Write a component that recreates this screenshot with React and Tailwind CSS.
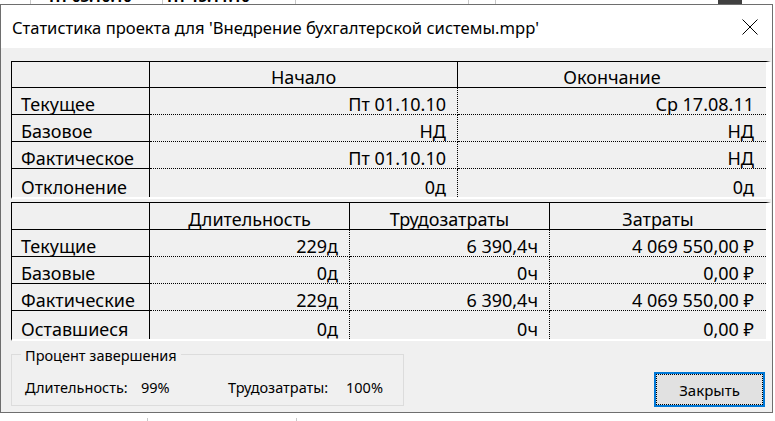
const font = "font-['Noto_Sans',sans-serif]";

const startEnd = [
  ["Текущее", "Пт 01.10.10", "Ср 17.08.11"],
  ["Базовое", "НД", "НД"],
  ["Фактическое", "Пт 01.10.10", "НД"],
  ["Отклонение", "0д", "0д"],
];

const totals = [
  ["Текущие", "229д", "6 390,4ч", "4 069 550,00 ₽"],
  ["Базовые", "0д", "0ч", "0,00 ₽"],
  ["Фактические", "229д", "6 390,4ч", "4 069 550,00 ₽"],
  ["Оставшиеся", "0д", "0ч", "0,00 ₽"],
];

function StatGrid({ headers, rows, gridClass }) {
  const lastRow = rows.length - 1;
  const lastCol = headers.length - 1;
  return (
    <div className="border-t border-l border-black border-r-[5px] border-r-white border-b-2 border-b-white w-[760px]">
      <div className={gridClass}>
        <div className="border-r border-b border-black" />
        {headers.map((h, i) => (
          <div
            key={h}
            className={
              "flex items-end justify-center border-b border-black" +
              (i < lastCol ? " border-r" : "")
            }
          >
            {h}
          </div>
        ))}
        {rows.map((row, r) => [
          <div
            key={"l" + r}
            className={
              "flex items-end pl-[9px] border-r border-black" +
              (r < lastRow ? " border-b" : "")
            }
          >
            {row[0]}
          </div>,
          ...row.slice(1).map((v, c) => (
            <div
              key={r + "-" + c}
              className={
                "flex items-end justify-end border-dotted border-black" +
                (c < lastCol ? " border-r pr-[11px]" : " pr-[12px]") +
                (r < lastRow ? " border-b" : "")
              }
            >
              {v}
            </div>
          )),
        ])}
      </div>
    </div>
  );
}

export default function App() {
  return (
    <div className={"w-[775px] h-[421px] overflow-hidden bg-white text-black " + font}>
      {/* сверху — кусок окна проекта за диалогом */}
      <div className="h-[4px] overflow-hidden flex text-[15px] font-bold leading-[14px]">
        <div className="w-[31px] border-r border-[#c8c8c8]" />
        <div className="w-[132px] border-r border-[#c8c8c8] -mt-[11px] pl-[18px] whitespace-nowrap">Пт 03.10.10</div>
        <div className="w-[133px] border-r border-[#c8c8c8] -mt-[11px] pl-[4px] whitespace-nowrap">Пт 15.11.10</div>
        <div className="w-[173px] border-r border-[#c8c8c8]" />
        <div className="w-[27px] border-r border-[#c8c8c8]" />
        <div className="w-[222px]" />
        <div className="w-[24px] bg-[#404040]" />
      </div>

      <div className="w-[773px] h-[409px] border border-[#6e6e6e] flex flex-col">
        <div className="h-[43px] bg-white flex justify-between pl-[11px] pr-[14px]">
          <div className="pt-[13px] text-[16.6px] leading-[20px] whitespace-nowrap">
            Статистика проекта для 'Внедрение бухгалтерской системы.mpp'
          </div>
          <svg width="16" height="16" viewBox="0 0 16 16" className="mt-[14px]">
            <path d="M0.5 0.5 L15.5 15.5 M15.5 0.5 L0.5 15.5" stroke="#000" strokeWidth="1" fill="none" />
          </svg>
        </div>

        <div className="flex-1 bg-[#f0f0f0] pl-[10px] pt-[13px] text-[18px] leading-[20px]">
          <StatGrid
            headers={["Начало", "Окончание"]}
            rows={startEnd}
            gridClass="grid grid-cols-[138px_308px_308px] grid-rows-[26px_27px_27px_27px_28px]"
          />
          <div className="mt-[3px]">
            <StatGrid
              headers={["Длительность", "Трудозатраты", "Затраты"]}
              rows={totals}
              gridClass="grid grid-cols-[138px_200px_200px_216px] grid-rows-[27px_27px_27px_27px_28px]"
            />
          </div>

          <div className="mt-[13px] flex justify-between pr-[7px]">
            <div className="relative w-[393px] h-[52px] border border-[#dcdcdc] text-[14.5px] leading-[18px]">
              <span className="absolute left-[9px] -top-[9px] px-[4px] bg-[#f0f0f0] whitespace-nowrap">
                Процент завершения
              </span>
              <div className="flex pl-[13px] pt-[23px] whitespace-nowrap">
                <span className="w-[116px]">Длительность:</span>
                <span className="w-[87px]">99%</span>
                <span className="w-[118px]">Трудозатраты:</span>
                <span>100%</span>
              </div>
            </div>
            <button className="mt-[18px] w-[111px] h-[35px] border-2 border-[#0078d7] bg-[#e1e1e1] text-[15px] leading-[18px]">
              <span className="flex w-full h-full items-center justify-center border border-dotted border-black">
                Закрыть
              </span>
            </button>
          </div>
        </div>
      </div>

      {/* снизу — строка таблицы проекта */}
      <div className="h-[8px] overflow-hidden flex text-[15px] font-bold leading-[18px] pt-[5px]">
        <div className="w-[148px] border-r border-[#c8c8c8] pl-[33px] whitespace-nowrap">Пт 03.11.10</div>
        <div className="w-[149px] border-r border-[#c8c8c8] pl-[15px] whitespace-nowrap">Пт 03.11.10</div>
        <div className="pl-[8px] whitespace-nowrap">15</div>
      </div>
    </div>
  );
}
